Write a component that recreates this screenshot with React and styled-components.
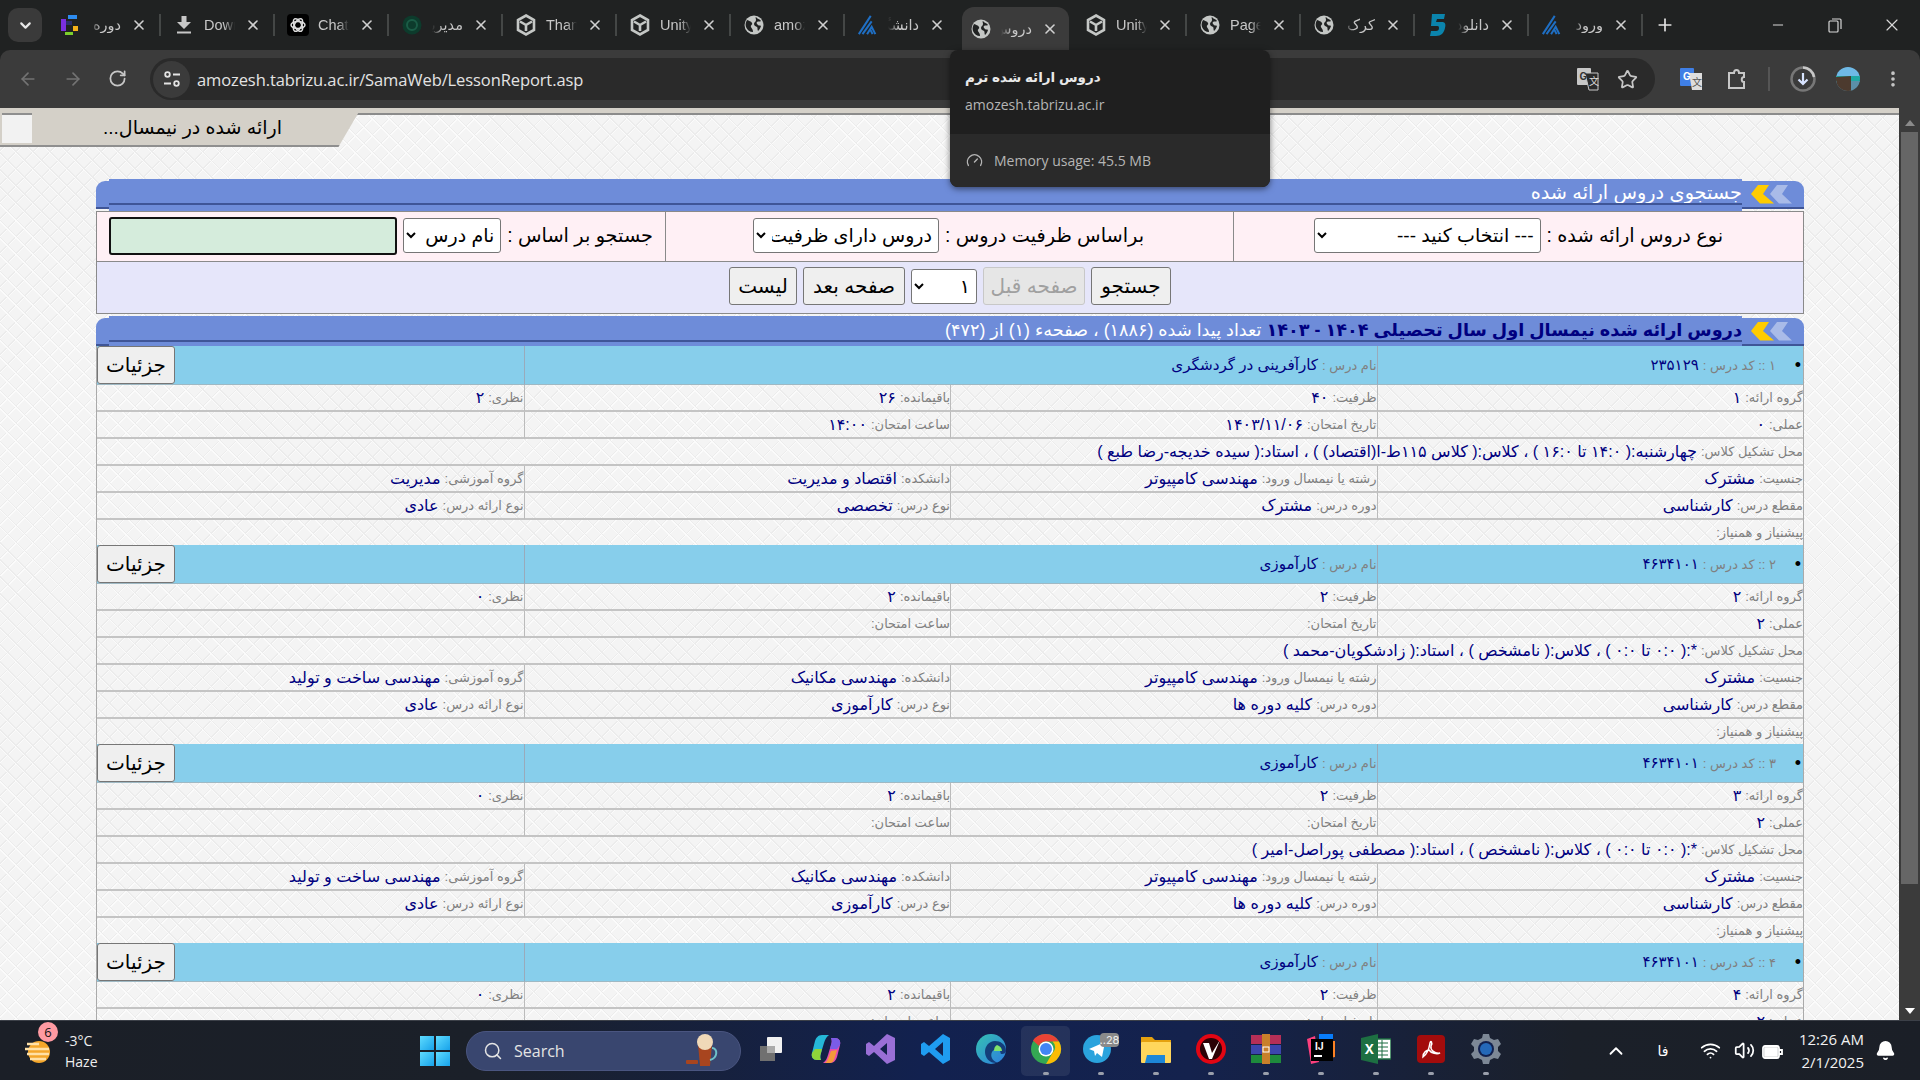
import React from "react";
import styled, { createGlobalStyle } from "styled-components";
import { ChevronDown, X, ArrowLeft, ArrowRight, RotateCw, Star, Plus, Minus, MoreVertical, Search, Wifi, Volume2, ChevronUp, Gauge, Bell } from "lucide-react";

const Global = createGlobalStyle`
  html, body { margin: 0; padding: 0; width: 1920px; height: 1080px; overflow: hidden; background: #202222; }
  * { box-sizing: border-box; }
  #root { width: 1920px; height: 1080px; }
`;

const FA = `"Liberation Sans", "DejaVu Sans", sans-serif`;
const UI = `"Open Sans", "Noto Sans", sans-serif`;

const Shell = styled.div`
  position: relative; width: 1920px; height: 1080px; display: flex; flex-direction: column; overflow: hidden; font-family: ${UI};
`;
const TabStrip = styled.div`
  height: 50px; flex: none; background: #202222; display: flex; align-items: flex-end; padding-left: 8px; color: #c7c7c7;
`;
const ListBtn = styled.div`
  width: 34px; height: 34px; flex: none; margin: 0 5px 8px 0; border-radius: 10px; background: #3a3a3a; display: flex; align-items: center; justify-content: center; color: #e8e8e8;
`;
const Tab = styled.div`
  position: relative; flex: none; width: ${p => p.$active ? 107 : 114}px; margin-right: ${p => p.$active ? 4 : 0}px; margin-left: ${p => p.$active ? 3 : 0}px; height: ${p => p.$active ? 43 : 50}px; display: flex; align-items: center; padding-left: ${p => p.$active ? 8 : 12}px;
  background: ${p => p.$active ? "#3b3b3b" : "transparent"}; border-radius: 12px 12px 0 0;
`;
const TabIconBox = styled.div`
  width: 22px; height: 22px; flex: none; display: flex; align-items: center; justify-content: center; color: #c4c7c5;
`;
const TabTitle = styled.div`
  width: 31px; margin: 0 9px; flex: none; font-size: 14.5px; overflow: hidden; white-space: nowrap; color: #c7c7c7; font-family: ${FA};
  direction: ${p => p.$rtl ? "rtl" : "ltr"};
  mask-image: linear-gradient(${p => p.$rtl ? "270deg" : "90deg"}, #000 65%, transparent 100%);
`;
const TabClose = styled.div`
  width: 18px; flex: none; display: flex; justify-content: center; color: #d0d0d0;
`;
const TabSep = styled.div`
  width: 2px; height: 22px; margin-left: 11px; background: ${p => p.$hide ? "transparent" : "#444746"}; flex: none;
`;
const NewTab = styled.div`
  width: 30px; flex: none; margin: 0 0 15px 7px; display: flex; justify-content: center; color: #e3e3e3;
`;
const WinControls = styled.div`
  margin-left: auto; height: 50px; display: flex; align-items: center; color: #d8d8d8;
`;
const WinBtn = styled.div`
  width: 57px; display: flex; justify-content: center;
`;
const Toolbar = styled.div`
  height: 58px; flex: none; background: #3b3b3b; border-radius: 10px 10px 0 0; display: flex; align-items: center; color: #c7c7c7; position: relative;
`;
const NavBtn = styled.div`
  width: 44.5px; display: flex; justify-content: center; color: ${p => p.$dim ? "#737373" : "#c7c7c7"};
`;
const NavGroup = styled.div`
  display: flex; padding-left: 6px; width: 150px; flex: none;
`;
const Omnibox = styled.div`
  width: 1505px; flex: none; height: 42px; border-radius: 21px; background: #2a2a2a; display: flex; align-items: center; padding: 0 17px 0 3px;
`;
const SiteBtn = styled.div`
  width: 37px; height: 37px; border-radius: 50%; background: #3b3b3b; display: flex; align-items: center; justify-content: center; margin-right: 7px; flex: none;
`;
const Url = styled.div`
  font-size: 16.5px; color: #e3e3e3; white-space: nowrap; letter-spacing: -.1px;
`;
const OmniRight = styled.div`
  margin-left: auto; display: flex; align-items: center; gap: 18px;
`;
const ToolRight = styled.div`
  display: flex; align-items: center; margin-left: 13px;
`;
const ToolSlot = styled.div`
  width: ${p => p.$w || 46}px; display: flex; justify-content: center;
`;
const ToolSep = styled.div`
  width: 2px; height: 24px; background: #555; margin: 0 10px 0 8px;
`;

const Main = styled.div`
  flex: 1; min-height: 0; display: flex; overflow: hidden;
`;
const Page = styled.div`
  flex: 1; min-width: 0; overflow: hidden; padding: 0 95px 0 96px; position: relative; background-color: #f4f4f4;
  background-image:
    repeating-linear-gradient(45deg, #fbfbfb 0 1px, #ececec 1px 2px, transparent 2px 12px),
    repeating-linear-gradient(-45deg, #fbfbfb 0 1px, #ececec 1px 2px, transparent 2px 12px);
`;
const TopStrip = styled.div`
  height: 7px; margin: 0 -95px 0 -96px; background: #d4d0c8; border-bottom: 2px solid #8b8b8b;
`;
const PageTab = styled.div`
  position: absolute; left: 0; top: 2px; width: 360px; height: 37px; background: #d4d0c8; display: flex; align-items: center;
  clip-path: polygon(0 0, 100% 0, 94% 100%, 0 100%); padding: 0 0 2px 2px; box-shadow: inset 0 -2px 0 #8f8f8f;
`;
const PageTabBox = styled.div`
  width: 30px; height: 30px; flex: none; background: #f2f2f2; border-top: 2px solid #8f8f8f;
`;
const PageTabText = styled.div`
  direction: rtl; margin-left: 71px; font: 19px ${FA}; color: #000; white-space: nowrap;
`;
const Panel = styled.div`
  direction: rtl; margin-top: 64px;
`;
const SectionHead = styled.div`
  display: flex; height: 32px; margin-top: ${p => p.$mt || 0}px;
`;
const CapRight = styled.div`
  width: 62px; height: 28px; flex: none; margin-top: 2px; background: #6e8cd9; border-radius: 0 9px 0 0; border-bottom: 2px solid #3f5597; display: flex; align-items: flex-start; padding-top: 3px;
`;
const CapLeft = styled.div`
  width: 13px; height: 28px; flex: none; margin-top: 2px; background: #6e8cd9; border-radius: 9px 0 0 0; border-bottom: 2px solid #3f5597;
`;
const HeadMiddle = styled.div`
  flex: 1; position: relative; background: #6e8cd9; color: #fff; font: ${p => p.$size || 19.3}px/28px ${FA}; white-space: nowrap; overflow: hidden;
  &::after { content: ""; position: absolute; left: 0; right: 0; top: 24px; height: 2px; background: #3f5597; }
`;
const Navy = styled.span`
  color: #000080; font-weight: ${p => p.$bold ? 700 : 400};
`;
const SearchBox = styled.div`
  border: 1px solid #8a8a8a; display: grid; grid-template-columns: 569px 1fr 569px; background: #fff0f5; height: 51px;
`;
const SearchCell = styled.div`
  display: flex; align-items: center; justify-content: ${p => p.$center ? "center" : "flex-start"}; gap: 6px; padding: 0 ${p => p.$pr || 12}px 2px 10px; font: 19.3px ${FA}; color: #000; white-space: nowrap;
  & + & { border-right: 1px solid #8a8a8a; }
`;
const Select = styled.select`
  direction: rtl; height: 35px; width: ${p => p.$w}px; flex: none; font: 19px ${FA}; background: #fff; color: #000; border: 1px solid #767676; border-radius: 3px; padding: 0 2px;
`;
const TextInput = styled.input`
  flex: none; width: 288px; height: 38px; background: #d5ecdc; border: 2px solid #111; border-radius: 3px;
`;
const ActionRow = styled.div`
  height: 52px; border: 1px solid #8a8a8a; border-top: 0; background: #e6e6fa; display: flex; align-items: center; justify-content: center; gap: 6px; padding-bottom: 3px;
`;
const Button = styled.button`
  height: ${p => p.$h || 38}px; padding: 0; width: ${p => p.$w}px; flex: none; font: 20px ${FA}; color: #000; background: #efefef; border: 1px solid #767676; border-radius: 3px;
  &:disabled { color: #a0a0a0; border-color: #c8c8c8; background: #e6e6e6; }
`;
const Records = styled.div`
  border: 1px solid #aaa; border-width: 0 1px; margin-top: -2px; position: relative;
`;
const Record = styled.div`
  display: grid; grid-template-columns: repeat(4, 1fr); grid-template-rows: 39px repeat(5, 27px) 25px;
`;
const Cell = styled.div`
  grid-column: span ${p => p.$span || 1}; display: flex; align-items: center; gap: 4px; white-space: nowrap; overflow: hidden;
  border-bottom: ${p => p.$noLine ? 0 : "2px solid #c4c4c4"}; border-left: ${p => p.$noDiv ? 0 : "1px solid #bbb"};
  padding-right: ${p => p.$pad || 0}px;
`;
const BlueCell = styled(Cell)`
  background: #87ceeb; border-bottom: 1px solid #9fb9c4; border-left: ${p => p.$noDiv ? 0 : "1px solid #9ab"};
  justify-content: ${p => p.$toLeft ? "flex-end" : "flex-start"};
`;
const Label = styled.span`
  font: 13px ${FA}; color: #808080;
`;
const Value = styled.span`
  font: ${p => p.$size || 16}px ${FA}; color: #000080;
`;
const Bullet = styled.span`
  position: absolute; right: 2px; font: 18px ${FA}; color: #000;
`;
const CodeCell = styled(BlueCell)`
  position: relative;
`;
const Scrollbar = styled.div`
  width: 21px; flex: none; background: #3b3b3b; display: flex; flex-direction: column; align-items: center; color: #999; padding-top: 4px;
`;
const ScrollArrow = styled.div`
  width: 0; height: 0; border-left: 5px solid transparent; border-right: 5px solid transparent; border-bottom: ${p => p.$down ? 0 : "6px solid #8a8a8a"}; border-top: ${p => p.$down ? "6px solid #fff" : 0}; margin: ${p => p.$down ? "auto 0 6px" : "8px 0 0"};
`;
const ScrollThumb = styled.div`
  width: 17px; height: 752px; margin-top: 6px; background: #666;
`;

const Tooltip = styled.div`
  position: absolute; left: 950px; top: 50px; width: 320px; height: 137px; border-radius: 8px; background: #1f1f1f; overflow: hidden; box-shadow: 0 2px 6px rgba(0,0,0,.5); display: flex; flex-direction: column; z-index: 5;
`;
const TipTop = styled.div`
  height: 84px; padding: 19px 15px 0; display: flex; flex-direction: column; gap: 10px;
`;
const TipTitle = styled.div`
  font: 700 13.5px ${FA}; color: #e8e8e8; direction: rtl; align-self: flex-start;
`;
const TipHost = styled.div`
  font-size: 14px; color: #b5b5b5;
`;
const TipBottom = styled.div`
  flex: 1; background: #2a2a2a; display: flex; align-items: center; gap: 11px; padding: 0 16px; color: #b5b5b5; font-size: 14px;
`;

const Taskbar = styled.div`
  height: 60px; flex: none; display: flex; align-items: center; color: #fff; border-top: 1px solid #3c4048;
  background: linear-gradient(90deg, #1b1f27 0, #1b2029 25%, #12214f 48%, #14224d 62%, #1b2029 82%, #1b1f27 100%);
`;
const Weather = styled.div`
  width: 420px; flex: none; padding-left: 24px; display: flex; align-items: center; gap: 11px; position: relative;
`;
const WBadge = styled.div`
  position: absolute; left: 38px; top: -8px; width: 20px; height: 20px; border-radius: 50%; background: #ff9aa2; color: #111; font-size: 13px; display: flex; align-items: center; justify-content: center;
`;
const WText = styled.div`
  font-size: 14px; line-height: 21px; color: #eee;
`;
const StartBtn = styled.div`
  width: 30px; height: 30px; flex: none; display: grid; grid-template-columns: 1fr 1fr; gap: 2px;
`;
const StartPane = styled.div`
  background: linear-gradient(135deg, #5fdcff, #17a2ea);
`;
const SearchPill = styled.div`
  width: 275px; height: 40px; margin-left: 16px; flex: none; border-radius: 20px; background: #39466f; display: flex; align-items: center; padding: 0 16px; gap: 11px; font-size: 16px; color: #e4e4e4; border: 1px solid #4a5580;
`;
const CoffeeMug = styled.svg`
  margin-left: auto;
`;
const Apps = styled.div`
  display: flex; margin-left: 2px;
`;
const AppSlot = styled.div`
  position: relative; width: 55px; height: 50px; display: flex; align-items: center; justify-content: center; padding-bottom: 4px;
  &::before { content: ""; position: absolute; inset: 0 3px; border-radius: 5px; background: ${p => p.$active ? "rgba(255,255,255,.08)" : "transparent"}; }
`;
const AppGlyph = styled.span`
  position: relative; display: flex;
`;
const AppDot = styled.span`
  position: absolute; bottom: 1px; left: 50%; transform: translateX(-50%); width: 6px; height: 3px; border-radius: 2px; background: #9a9fab; display: ${p => p.$show ? "block" : "none"};
`;
const Tray = styled.div`
  margin-left: auto; display: flex; align-items: center; color: #fff; padding-right: 14px;
`;
const TrayItem = styled.div`
  width: ${p => p.$w || 30}px; display: flex; justify-content: center; font: 14px ${FA};
`;
const Clock = styled.div`
  width: 70px; margin-left: 8px; text-align: right; font-size: 15px; line-height: 23px; color: #f2f2f2; white-space: nowrap;
  display: flex; flex-direction: column; align-items: flex-end;
`;

const Globe = ({ s = 20 }) => (
  <svg width={s} height={s} viewBox="0 0 20 20"><circle cx="10" cy="10" r="9.5" fill="#c4c7c5" /><path d="M3 5c2 1 4 1 5 3s-2 2-1 4 2 2 2 5c-3 0-6-2-7-5s0-5 1-7zM12 2c1 2 4 2 5 4-1 1-3 0-4 1s0 2 1 3 2 0 3 1c-1 3-2 4-3 5-1-2 0-3-1-4s-3-1-3-3 2-2 2-4-1-2 0-3z" fill="#202222" /></svg>
);
const Unity = () => (
  <svg width="20" height="22" viewBox="0 0 20 22" fill="none" stroke="#c4c7c5" strokeWidth="2.6"><path d="M10 1.500 18 6v10l-8 4.500-8-4.500V6z" /><path d="M10 11 4 7.500M10 11l6-3.500M10 11v6" /></svg>
);
const KLogo = () => (
  <svg width="24" height="24" viewBox="0 0 24 24" fill="none" stroke="#1f6fc4" strokeWidth="2.200"><path d="M2 22 15 2M6 22 16 8M11 22l5-8 4 8M17 22l-3-6" /></svg>
);
const Five = () => (
  <svg width="18" height="24" viewBox="0 0 18 24"><path d="M3 1h13l-1 5H8L7 9h6c3 0 4 2 3 6-1 5-4 8-9 8H1l1-5h5c2 0 3-1 3-3s-1-2-3-2H2z" fill="#0b84ac" /></svg>
);
const Colored = () => (
  <svg width="20" height="22" viewBox="0 0 20 22"><path d="M8 1h9v4H8z" fill="#2d8cf0" /><path d="M1 5h5v12H1z" fill="#7b2fe0" /><path d="M6 7h6v4H6z" fill="#2a2f6a" /><path d="M13 12h5v5h-5z" fill="#f6b21a" /><path d="M5 18h8v3H5z" fill="#7ccf2c" /></svg>
);
const GptIcon = () => (
  <svg width="22" height="22" viewBox="0 0 22 22"><rect width="22" height="22" rx="4" fill="#000" /><g fill="none" stroke="#ddd" strokeWidth="1.500"><ellipse cx="11" cy="11" rx="7" ry="3.500" /><ellipse cx="11" cy="11" rx="7" ry="3.500" transform="rotate(60 11 11)" /><ellipse cx="11" cy="11" rx="7" ry="3.500" transform="rotate(120 11 11)" /></g></svg>
);
const DarkCircle = () => (
  <svg width="20" height="20" viewBox="0 0 20 20"><circle cx="10" cy="10" r="9.500" fill="#0d3b2c" /><circle cx="10" cy="10" r="5" fill="none" stroke="#1b5c46" strokeWidth="2" /></svg>
);
const DownloadIcon = () => (
  <svg width="16" height="18" viewBox="0 0 16 18"><path d="M5.500 0h5v6H15L8 13 1 6h4.500z" fill="#c7c7c7" /><rect x="1" y="15.500" width="14" height="2" fill="#c7c7c7" /></svg>
);

const tabs = [
  [<Colored />, "دوره"], [<DownloadIcon />, "Downloads"], [<GptIcon />, "ChatGPT"], [<DarkCircle />, "مدیریت"],
  [<Unity />, "Thank"], [<Unity />, "Unity"], [<Globe />, "amozesh"], [<KLogo />, "دانشگاه"], [<Globe />, "دروس", true],
  [<Unity />, "Unity"], [<Globe />, "Page"], [<Globe />, "کرک"], [<Five />, "دانلود"], [<KLogo />, "ورود"],
];
const isRtl = s => /[\u0600-\u06FF]/.test(s);

const base = (n, code, name, group, cap, rem, th, pr, date, time, loc, fac, dept, period, type) => ({ n, code, name, group, cap, rem, th, pr, date, time, loc, fac, dept, period, type });
const records = [
  base("۱", "۲۳۵۱۲۹", "کارآفرینی در گردشگری", "۱", "۴۰", "۲۶", "۲", "۰", "۱۴۰۳/۱۱/۰۶", "۱۴:۰۰",
    "چهارشنبه:( ۱۴:۰ تا ۱۶:۰ ) ، کلاس:( کلاس ۱۱۵ط-ا(اقتصاد) ) ، استاد:( سیده خدیجه-رضا طبع )", "اقتصاد و مدیریت", "مدیریت", "مشترک", "تخصصی"),
  base("۲", "۴۶۳۴۱۰۱", "کارآموزی", "۲", "۲", "۲", "۰", "۲", "", "", "*:( ۰:۰ تا ۰:۰ ) ، کلاس:( نامشخص ) ، استاد:( زادشکویان-محمد )", "مهندسی مکانیک", "مهندسی ساخت و تولید", "کلیه دوره ها", "کارآموزی"),
  base("۳", "۴۶۳۴۱۰۱", "کارآموزی", "۳", "۲", "۲", "۰", "۲", "", "", "*:( ۰:۰ تا ۰:۰ ) ، کلاس:( نامشخص ) ، استاد:( مصطفی پوراصل-امیر )", "مهندسی مکانیک", "مهندسی ساخت و تولید", "کلیه دوره ها", "کارآموزی"),
  base("۴", "۴۶۳۴۱۰۱", "کارآموزی", "۴", "۲", "۲", "۰", "۲", "", "", "", "مهندسی مکانیک", "مهندسی ساخت و تولید", "کلیه دوره ها", "کارآموزی"),
];

const Field = ({ label, value, span, noDiv, noLine }) => (
  <Cell $span={span} $noDiv={noDiv} $noLine={noLine}>
    {label && <Label>{label}</Label>}
    {value && <Value>{value}</Value>}
  </Cell>
);

const Chevrons = () => (
  <svg width="62" height="21" viewBox="0 0 62 21"><path d="M16 1h11l-6 9 11 9.500H18L9 10z" fill="#ffcc00" /><path d="M35 1h11l-6 9 10 9.500H37L28 10z" fill="#a9bbe8" /></svg>
);

const TaskIcons = {
  tv: <svg width="30" height="30" viewBox="0 0 30 30"><rect x="4" y="12" width="15" height="15" fill="#707070" /><rect x="11" y="3" width="15" height="16" rx="1" fill="#f1f1f1" /><rect x="11" y="12" width="8" height="7" fill="#aaa" /></svg>,
  cop: <svg width="30" height="32" viewBox="0 0 30 32"><path d="M11 2c-4 0-6 3-7 6L1 20c-1 4 1 7 5 7h4c-1-2-1-4 0-7l3-10c1-3 2-6 5-8z" fill="#25b8d8" /><path d="M1 20c-1 4 1 7 5 7h4c-1-2-1-4 0-7l1-4H4z" fill="#8fd43a" /><path d="M19 30c4 0 6-3 7-6l3-12c1-4-1-7-5-7h-4c1 2 1 4 0 7l-3 10c-1 3-2 6-5 8z" fill="#e64bb0" /><path d="M29 12c1-4-1-7-5-7h-4c1 2 1 4 0 7l-1 4h7z" fill="#7a5ce8" /><path d="M24 24l2-7-6 1-3 8c-1 2-2 3-3 4h5c3 0 4-3 5-6z" fill="#f59a3a" /></svg>,
  vs: <svg width="30" height="32" viewBox="0 0 30 32"><path d="M21 1l8 4v22l-8 4-13-12-5 4-3-2V11l3-2 5 4zM21 10l-7 6 7 6z" fill="#9a6fd6" /></svg>,
  code: <svg width="30" height="32" viewBox="0 0 30 32"><path d="M22 1l7 4v22l-7 4-14-12-5 4-3-2V11l3-2 5 4zM22 9l-8 7 8 7z" fill="#1f9cf0" /></svg>,
  edge: <svg width="32" height="32" viewBox="0 0 32 32"><defs><linearGradient id="eg" x1="0" y1="0" x2="1" y2="1"><stop offset="0" stopColor="#35c1b1" /><stop offset="1" stopColor="#2d7de0" /></linearGradient></defs><circle cx="16" cy="16" r="15" fill="url(#eg)" /><path d="M31 18c0-7-6-10-11-10-6 0-10 5-10 11 0 6 5 12 13 11-6-2-8-7-6-11 2-3 6-3 8-1 1 2 0 3 2 3s4-1 4-3z" fill="#0f2e6b" opacity=".85" /><path d="M22 12c3 1 5 3 5 6h-8c0-3 1-5 3-6z" fill="#7fe36b" /></svg>,
  chrome: <svg width="32" height="32" viewBox="0 0 32 32"><circle cx="16" cy="16" r="15" fill="#34a853" /><path d="M16 1a15 15 0 0 1 13 7.500H16a7.500 7.500 0 0 0-7 4.500L3 7.500A15 15 0 0 1 16 1z" fill="#ea4335" /><path d="M29 8.500A15 15 0 0 1 16 31l6.500-11a7.500 7.500 0 0 0 0-11.500z" fill="#fbbc05" /><circle cx="16" cy="16" r="7.500" fill="#fff" /><circle cx="16" cy="16" r="6" fill="#4285f4" /></svg>,
  tg: <svg width="36" height="32" viewBox="0 0 36 32"><circle cx="14" cy="16" r="14" fill="#2aa3dd" /><path d="M6 16l16-7-3 15-5-4-2 3-1-5z" fill="#fff" /><rect x="17" y="0" width="19" height="14" rx="4" fill="#8a8a8a" /><text x="26.500" y="11" textAnchor="middle" fontSize="11" fill="#eee" fontFamily="Inter, sans-serif">..28</text></svg>,
  folder: <svg width="32" height="28" viewBox="0 0 32 28"><path d="M1 2h11l3 3h16v6H1z" fill="#e5a10f" /><rect x="1" y="7" width="30" height="21" rx="1" fill="#ffd65c" /><path d="M7 20h18v8H5z" fill="#1d87d8" /></svg>,
  vivaldi: <svg width="32" height="32" viewBox="0 0 32 32"><circle cx="16" cy="16" r="15" fill="#e20613" /><circle cx="16" cy="16" r="11" fill="#2a0206" /><path d="M8 10h6l3 10 8-13-8 19h-3z" fill="#fff" /></svg>,
  rar: <svg width="30" height="30" viewBox="0 0 30 30"><rect y="1" width="30" height="9" fill="#b62f57" /><rect y="11" width="30" height="9" fill="#3c45ad" /><rect y="21" width="30" height="8" fill="#1e8a3c" /><rect x="11" y="0" width="8" height="30" fill="#c9802a" /><rect x="12" y="13" width="6" height="5" fill="none" stroke="#fff" /></svg>,
  ij: <svg width="32" height="32" viewBox="0 0 32 32"><path d="M2 6l8-3 4 26-8 2z" fill="#fc3f7d" /><path d="M14 1h14v24H14z" fill="#087cfa" /><path d="M20 26l10-2V8h-4z" fill="#fd8224" /><rect x="6" y="6" width="22" height="22" fill="#000" /><text x="10" y="17" fontSize="10" fontWeight="700" fill="#fff" fontFamily="Inter, sans-serif">IJ</text><rect x="9" y="22" width="8" height="2" fill="#fff" /></svg>,
  xl: <svg width="30" height="30" viewBox="0 0 30 30"><rect x="12" y="5" width="18" height="20" fill="#fff" stroke="#1d6f42" strokeWidth="1.500" /><path d="M16 9h11M16 13h11M16 17h11M16 21h11M21 6v18" stroke="#1d6f42" /><path d="M0 4l17-4v30L0 26z" fill="#1d6f42" /><text x="3.500" y="20" fontSize="13" fontWeight="700" fill="#fff" fontFamily="Inter, sans-serif">X</text></svg>,
  pdf: <svg width="28" height="28" viewBox="0 0 28 28"><rect width="28" height="28" rx="4" fill="#a30c0c" /><path d="M6 22c3-2 6-8 7-14 .5-3 3-1 1 3-1 4 4 8 9 7-3 2-9 0-11-3-2 0-6 2-6 7z" fill="none" stroke="#fff" strokeWidth="1.500" /></svg>,
  gear: <svg width="32" height="32" viewBox="0 0 32 32"><path d="M13 1h6l1 4 4 2 4-1 3 5-3 3v4l3 3-3 5-4-1-4 2-1 4h-6l-1-4-4-2-4 1-3-5 3-3v-4l-3-3 3-5 4 1 4-2z" fill="#7d8896" /><circle cx="16" cy="16" r="8" fill="#12214f" /><circle cx="16" cy="16" r="6" fill="#2468b8" /></svg>,
};

const taskOrder = ["tv", "cop", "vs", "code", "edge", "chrome", "tg", "folder", "vivaldi", "rar", "ij", "xl", "pdf", "gear"];

export default function App() {
  return (
    <Shell>
      <Global />
      <TabStrip>
        <ListBtn><ChevronDown size={17} strokeWidth={3} /></ListBtn>
        {tabs.map(([icon, title, active], i) => (
          <Tab key={i} $active={active}>
            <TabIconBox>{icon}</TabIconBox>
            <TabTitle $rtl={isRtl(title)}>{title}</TabTitle>
            <TabClose><X size={16} strokeWidth={2.400} /></TabClose>
            <TabSep $hide={active || i === 7} />
          </Tab>
        ))}
        <NewTab><Plus size={20} strokeWidth={2} /></NewTab>
        <WinControls>
          <WinBtn><Minus size={16} strokeWidth={1.500} /></WinBtn>
          <WinBtn><svg width="14" height="15" viewBox="0 0 14 15" fill="none" stroke="#d8d8d8" strokeWidth="1.200"><rect x="1" y="3" width="9" height="11" rx="1" /><path d="M4 1h8a1 1 0 0 1 1 1v9" /></svg></WinBtn>
          <WinBtn><X size={20} strokeWidth={1.400} /></WinBtn>
        </WinControls>
      </TabStrip>

      <Toolbar>
        <NavGroup>
          <NavBtn $dim><ArrowLeft size={20} /></NavBtn>
          <NavBtn $dim><ArrowRight size={20} /></NavBtn>
          <NavBtn><RotateCw size={19} strokeWidth={2.200} /></NavBtn>
        </NavGroup>
        <Omnibox>
          <SiteBtn>
            <svg width="18" height="18" viewBox="0 0 18 18" fill="none" stroke="#e3e3e3" strokeWidth="1.800"><circle cx="4.500" cy="4.500" r="2.300" /><path d="M10 4.500h7M1 13.500h7" /><circle cx="13.500" cy="13.500" r="2.300" /></svg>
          </SiteBtn>
          <Url>amozesh.tabrizu.ac.ir/SamaWeb/LessonReport.asp</Url>
          <OmniRight>
            <svg width="22" height="24" viewBox="0 0 22 24"><rect x="0" y="1" width="14" height="17" rx="1" fill="#c7c7c7" /><path d="M8 6h13v17H12z" fill="#2a2a2a" stroke="#c7c7c7" /><text x="2.500" y="13" fontSize="10" fontWeight="700" fill="#333" fontFamily="Inter, sans-serif">G</text><text x="12" y="18" fontSize="10" fill="#ddd" fontFamily="Noto Sans CJK SC, sans-serif">文</text></svg>
            <Star size={21} strokeWidth={2} />
          </OmniRight>
        </Omnibox>
        <ToolRight>
          <ToolSlot $w={46}><svg width="22" height="24" viewBox="0 0 22 24"><rect x="0" y="1" width="14" height="18" rx="1" fill="#3f7fe6" /><path d="M9 6h13v17H12z" fill="#ddd" /><text x="3" y="13" fontSize="10" fontWeight="700" fill="#fff" fontFamily="Inter, sans-serif">G</text><text x="12" y="19" fontSize="10" fill="#555" fontFamily="Noto Sans CJK SC, sans-serif">文</text></svg></ToolSlot>
          <ToolSlot $w={46}><svg width="20" height="22" viewBox="0 0 20 22" fill="none" stroke="#c7c7c7" strokeWidth="2"><path d="M2 5h5c0-4 5-4 5 0h5v4c-3 0-3 5 0 5v6H2z" /></svg></ToolSlot>
          <ToolSep />
          <ToolSlot $w={46}><svg width="26" height="26" viewBox="0 0 26 26" fill="none"><circle cx="13" cy="13" r="11.500" stroke="#777" strokeWidth="2.500" /><path d="M13 1.500A11.500 11.500 0 0 1 24 11" stroke="#c7c7c7" strokeWidth="2.500" /><path d="M13 7v11M8.500 13.500 13 18l4.500-4.500" stroke="#d8e4ff" strokeWidth="2.200" /></svg></ToolSlot>
          <ToolSlot $w={44}><svg width="26" height="26" viewBox="0 0 26 26"><defs><clipPath id="av"><circle cx="13" cy="13" r="12" /></clipPath></defs><g clipPath="url(#av)"><rect width="26" height="11" fill="#6fb9e6" /><rect y="10" width="26" height="6" fill="#1fa8a4" /><rect y="15" width="26" height="11" fill="#5b8fa8" /><path d="M0 11l16-1 0 16H4z" fill="#4c3a2e" /></g></svg></ToolSlot>
          <ToolSlot $w={46}><MoreVertical size={20} strokeWidth={2.400} /></ToolSlot>
        </ToolRight>
      </Toolbar>

      <Main>
        <Page>
          <TopStrip />
          <PageTab>
            <PageTabBox />
            <PageTabText>ارائه شده در نیمسال...</PageTabText>
          </PageTab>
          <Panel>
            <SectionHead>
              <CapRight><Chevrons /></CapRight>
              <HeadMiddle>جستجوی دروس ارائه شده</HeadMiddle>
              <CapLeft />
            </SectionHead>
            <SearchBox>
              <SearchCell $pr={80}>
                <span>نوع دروس ارائه شده :</span>
                <Select $w={227}><option>--- انتخاب کنید ---</option></Select>
              </SearchCell>
              <SearchCell $center>
                <span>براساس ظرفیت دروس :</span>
                <Select $w={186}><option>دروس دارای ظرفیت</option></Select>
              </SearchCell>
              <SearchCell>
                <span>جستجو بر اساس :</span>
                <Select $w={98}><option>نام درس</option></Select>
                <TextInput />
              </SearchCell>
            </SearchBox>
            <ActionRow>
              <Button $w={80}>جستجو</Button>
              <Button $w={102} disabled>صفحه قبل</Button>
              <Select $w={66}><option>۱</option></Select>
              <Button $w={102}>صفحه بعد</Button>
              <Button $w={68}>لیست</Button>
            </ActionRow>
            <SectionHead $mt={2}>
              <CapRight><Chevrons /></CapRight>
              <HeadMiddle $size={17.7}>
                <Navy $bold>دروس ارائه شده نیمسال اول سال تحصیلی ۱۴۰۴ - ۱۴۰۳</Navy> تعداد پیدا شده (۱۸۸۶) ، صفحهء (۱) از (۴۷۲)
              </HeadMiddle>
              <CapLeft />
            </SectionHead>
            <Records>
              {records.map(r => (
                <Record key={r.n}>
                  <CodeCell $pad={27}>
                    <Bullet>•</Bullet>
                    <Label>{r.n} :: کد درس :</Label>
                    <Value $size={15}>{r.code}</Value>
                  </CodeCell>
                  <BlueCell $span={2}>
                    <Label>نام درس :</Label>
                    <Value $size={15.2}>{r.name}</Value>
                  </BlueCell>
                  <BlueCell $noDiv $toLeft>
                    <Button $w={78} $h={38}>جزئیات</Button>
                  </BlueCell>
                  <Field label="گروه ارائه:" value={r.group} />
                  <Field label="ظرفیت:" value={r.cap} />
                  <Field label="باقیمانده:" value={r.rem} />
                  <Field label="نظری:" value={r.th} noDiv />
                  <Field label="عملی:" value={r.pr} />
                  <Field label="تاریخ امتحان:" value={r.date} />
                  <Field label="ساعت امتحان:" value={r.time} />
                  <Field noDiv />
                  <Field span={4} noDiv label="محل تشکیل کلاس:" value={r.loc} />
                  <Field label="جنسیت:" value="مشترک" />
                  <Field label="رشته یا نیمسال ورود:" value="مهندسی کامپیوتر" />
                  <Field label="دانشکده:" value={r.fac} />
                  <Field label="گروه آموزشی:" value={r.dept} noDiv />
                  <Field label="مقطع درس:" value="کارشناسی" />
                  <Field label="دوره درس:" value={r.period} />
                  <Field label="نوع درس:" value={r.type} />
                  <Field label="نوع ارائه درس:" value="عادی" noDiv />
                  <Field span={4} noDiv noLine label="پیشنیاز و همنیاز:" />
                </Record>
              ))}
            </Records>
          </Panel>
        </Page>
        <Scrollbar>
          <ScrollArrow />
          <ScrollThumb />
          <ScrollArrow $down />
        </Scrollbar>
      </Main>

      <Taskbar>
        <Weather>
          <svg width="30" height="30" viewBox="0 0 30 30"><circle cx="15" cy="16" r="11" fill="#f4a62a" /><path d="M3 8h12M1 13h24M3 18h22M6 23h16" stroke="#ffe0a6" strokeWidth="2.500" /></svg>
          <WBadge>6</WBadge>
          <WText>-3°C<br />Haze</WText>
        </Weather>
        <StartBtn><StartPane /><StartPane /><StartPane /><StartPane /></StartBtn>
        <SearchPill>
          <Search size={20} strokeWidth={1.800} />
          <span>Search</span>
          <CoffeeMug width="40" height="38" viewBox="0 0 40 38"><path d="M14 12h14l-2 22H16z" fill="#a8451f" /><ellipse cx="21" cy="10" rx="8" ry="8" fill="#f0d9b8" /><path d="M28 16c6 0 6 10-2 12" fill="none" stroke="#6fc2c9" strokeWidth="2" /><rect x="2" y="28" width="12" height="4" rx="1" fill="#a8451f" /></CoffeeMug>
        </SearchPill>
        <Apps>
          {taskOrder.map((k, i) => (
            <AppSlot key={k} $active={k === "chrome"}>
              <AppGlyph>{TaskIcons[k]}</AppGlyph>
              <AppDot $show={i > 4} />
            </AppSlot>
          ))}
        </Apps>
        <Tray>
          <TrayItem $w={40}><ChevronUp size={22} strokeWidth={2} /></TrayItem>
          <TrayItem $w={54}>فا</TrayItem>
          <TrayItem $w={40}><Wifi size={21} /></TrayItem>
          <TrayItem $w={28}><Volume2 size={21} /></TrayItem>
          <TrayItem $w={28}><svg width="22" height="22" viewBox="0 0 22 22" fill="none" stroke="#fff" strokeWidth="1.800"><rect x="2" y="6" width="16" height="12" rx="2" /><path d="M18 10h3v4h-3" /><rect x="4" y="8" width="12" height="8" fill="#fff" /></svg></TrayItem>
          <Clock><span>12:26 AM</span><span>2/1/2025</span></Clock>
          <TrayItem $w={42}><Bell size={21} fill="#fff" /></TrayItem>
        </Tray>
      </Taskbar>

      <Tooltip>
        <TipTop>
          <TipTitle>دروس ارائه شده ترم</TipTitle>
          <TipHost>amozesh.tabrizu.ac.ir</TipHost>
        </TipTop>
        <TipBottom><Gauge size={17} /><span>Memory usage: 45.5 MB</span></TipBottom>
      </Tooltip>
    </Shell>
  );
}
